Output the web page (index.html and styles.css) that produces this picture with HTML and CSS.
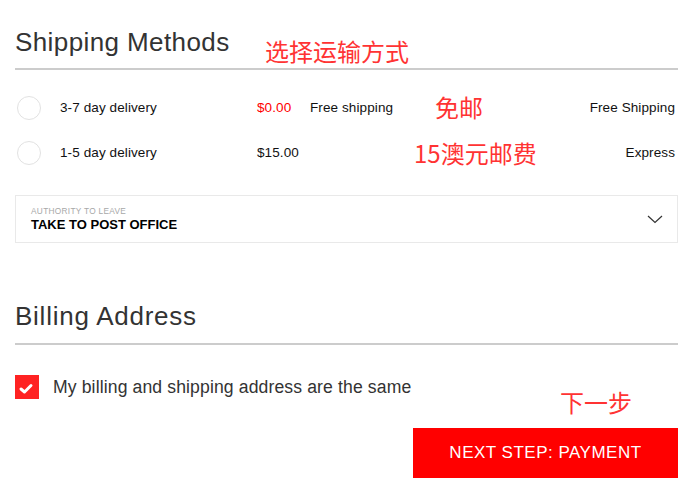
FILE: index.html
```html
<!DOCTYPE html>
<html lang="en">
<head>
<meta charset="utf-8">
<title>Checkout</title>
<link rel="stylesheet" href="styles.css">
</head>
<body>
<div class="page">
  <h2 class="section-title">Shipping Methods</h2>
  <div class="methods">
    <div class="method">
      <span class="radio"></span>
      <span class="m-name">3-7 day delivery</span>
      <span class="m-price free">$0.00</span>
      <span class="m-desc">Free shipping</span>
      <span class="m-type">Free Shipping</span>
    </div>
    <div class="method">
      <span class="radio"></span>
      <span class="m-name">1-5 day delivery</span>
      <span class="m-price">$15.00</span>
      <span class="m-desc"></span>
      <span class="m-type">Express</span>
    </div>
  </div>
  <div class="select">
    <div class="select-text">
      <span class="select-label">AUTHORITY TO LEAVE</span>
      <span class="select-value">TAKE TO POST OFFICE</span>
    </div>
    <svg class="chevron" width="16" height="9" viewBox="0 0 16 9"><polyline points="1,1 8,7.5 15,1" fill="none" stroke="#333" stroke-width="1.2"/></svg>
  </div>
  <h2 class="section-title billing">Billing Address</h2>
  <label class="same">
    <span class="checkbox"><svg width="24" height="24" viewBox="0 0 24 24"><path d="M6 14 L9.5 17 L16 10.5" fill="none" stroke="#fff" stroke-width="3" stroke-linecap="round" stroke-linejoin="round"/></svg></span>
    <span class="same-text">My billing and shipping address are the same</span>
  </label>
  <div class="actions">
    <button class="next">NEXT STEP: PAYMENT</button>
  </div>
  <span class="note note-1">选择运输方式</span>
  <span class="note note-2">免邮</span>
  <span class="note note-3">15澳元邮费</span>
  <span class="note note-4">下一步</span>
</div>
</body>
</html>
```
FILE: styles.css
```css
html, body {
  margin: 0;
  padding: 0;
  background: #fff;
}
body {
  font-family: "Liberation Sans", Arial, sans-serif;
  color: #111;
}
.page {
  position: relative;
  padding: 0 21px 22px 15px;
}
.section-title {
  margin: 0;
  padding: 27px 0 11px;
  font-size: 26px;
  line-height: 30px;
  font-weight: normal;
  letter-spacing: 0.4px;
  color: #333;
  border-bottom: 2px solid #ccc;
}
.section-title.billing {
  margin-top: 58px;
  padding-top: 0;
  padding-bottom: 12px;
  letter-spacing: 0.75px;
}
.methods {
  margin-top: 15px;
}
.method {
  display: grid;
  grid-template-columns: 43px 197px 53px 1fr auto;
  align-items: center;
  height: 45px;
  padding: 0 3px 0 2px;
  font-size: 13.5px;
  letter-spacing: 0.1px;
}
.radio {
  width: 22px;
  height: 22px;
  border: 1px solid #e2e2e2;
  border-radius: 50%;
}
.m-price.free {
  color: #f00;
}
.m-type {
  text-align: right;
}
.select {
  margin-top: 20px;
  border: 1px solid #e9e9e9;
  height: 46px;
  display: flex;
  align-items: center;
  justify-content: space-between;
  padding: 0 14px 0 15px;
}
.select-text {
  display: flex;
  flex-direction: column;
  padding-top: 1px;
}
.select-label {
  font-size: 8.3px;
  line-height: 11px;
  letter-spacing: 0.3px;
  color: #a8a8a8;
}
.select-value {
  font-size: 13px;
  line-height: 16px;
  font-weight: bold;
  color: #000;
}
.chevron {
  display: block;
}
.same {
  display: flex;
  align-items: center;
  gap: 14px;
  margin-top: 30px;
}
.checkbox {
  width: 24px;
  height: 24px;
  background: #f22;
  display: block;
}
.checkbox svg {
  display: block;
}
.same-text {
  font-size: 17.6px;
  letter-spacing: 0.12px;
  color: #333;
}
.actions {
  display: flex;
  justify-content: flex-end;
  margin-top: 29px;
}
.next {
  width: 265px;
  height: 50px;
  border: 0;
  background: #f00;
  color: #fff;
  font-family: "Liberation Sans", Arial, sans-serif;
  font-size: 17px;
  letter-spacing: 0.5px;
  padding: 0;
}
.note {
  position: absolute;
  font-family: "Noto Sans CJK SC", sans-serif;
  font-size: 24px;
  line-height: 1;
  color: #f33;
  white-space: nowrap;
}
.note-1 { left: 265px; top: 39px; }
.note-2 { left: 435px; top: 95px; }
.note-3 { left: 414px; top: 141px; }
.note-4 { left: 560px; top: 390px; }
```
